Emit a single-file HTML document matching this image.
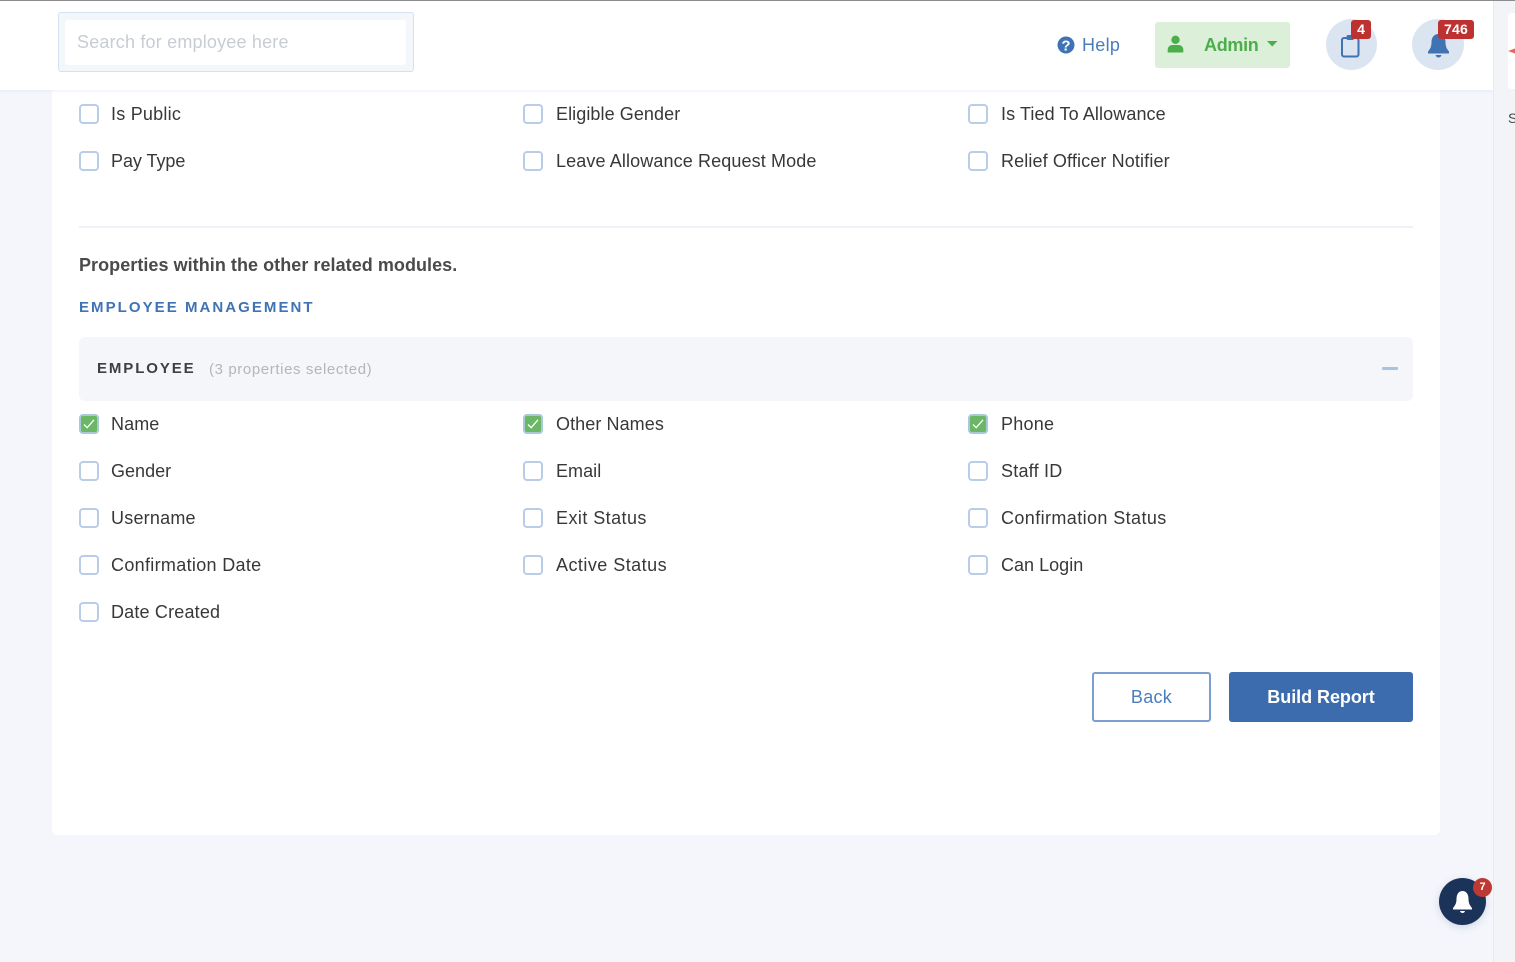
<!DOCTYPE html>
<html lang="en">
<head>
<meta charset="utf-8">
<title>Build Report</title>
<style>
html,body{margin:0;padding:0;}
body{width:1515px;height:962px;position:relative;overflow:hidden;background:#f4f6fb;font-family:"Liberation Sans",sans-serif;color:#3d3d3d;}
.a{position:absolute;}
.t{position:absolute;white-space:nowrap;line-height:22px;font-size:18px;color:#38383a;}
.c{position:absolute;width:16px;height:16px;border:2px solid #b9cde8;border-radius:4px;background:#fff;}
.g{position:absolute;width:16px;height:16px;border:2px solid #a9c8d8;border-radius:4px;background:#6ab766;}
.g svg{position:absolute;left:2px;top:2px;}
</style>
</head>
<body>
<div class="a" style="left:0;top:0;width:1493px;height:90px;background:#fff;box-shadow:0 1px 3px rgba(200,210,230,.35);z-index:3;"></div>
<div class="a" style="left:0;top:0;width:1515px;height:1px;background:#8c8c8c;z-index:6;"></div>

<div class="a" style="left:58px;top:12px;width:354px;height:58px;background:#f3f6fb;border:1px solid #d5e1f0;border-radius:3px;z-index:4;"></div>
<div class="a" style="left:65px;top:20px;width:341px;height:45px;background:#fff;border-radius:3px;z-index:4;"></div>
<div class="t" style="left:77px;top:31px;color:#c8ccd3;letter-spacing:.19px;z-index:5;">Search for employee here</div>

<svg class="a" style="left:1057px;top:36px;z-index:5;" width="18" height="18" viewBox="0 0 18 18"><circle cx="9" cy="9" r="8.500" fill="#3f73b4"/><text x="9" y="14.500" text-anchor="middle" font-family="Liberation Sans" font-weight="700" font-size="15" fill="#fff">?</text></svg>
<div class="t" style="left:1082px;top:34px;color:#4a7dbc;letter-spacing:.3px;z-index:5;">Help</div>

<div class="a" style="left:1155px;top:22px;width:135px;height:46px;background:#dcefd9;border-radius:3px;z-index:5;"></div>
<svg class="a" style="left:1167px;top:35px;z-index:6;" width="17" height="18" viewBox="0 0 17 18"><circle cx="8.500" cy="4.800" r="4.200" fill="#4cae4a"/><path d="M.7 17.500v-2.700C.7 11.800 3 10 5.500 10h6c2.500 0 4.800 1.800 4.800 4.800v2.700z" fill="#4cae4a"/></svg>
<div class="t" style="left:1204px;top:34px;color:#4cae4a;font-weight:700;letter-spacing:-.3px;z-index:6;">Admin</div>
<svg class="a" style="left:1267px;top:41px;z-index:6;" width="11" height="6" viewBox="0 0 11 6"><path d="M0 0h10.500L5.200 5.500z" fill="#4cae4a"/></svg>

<div class="a" style="left:1326px;top:19px;width:51px;height:51px;border-radius:50%;background:#dbe5f1;z-index:5;"></div>
<svg class="a" style="left:1340px;top:33px;z-index:6;" width="21" height="25" viewBox="0 0 21 25"><rect x="2" y="5" width="16.500" height="18.500" rx="2" fill="none" stroke="#3f73b4" stroke-width="2"/><rect x="6.500" y="2" width="7.500" height="5" rx="1.500" fill="#3f73b4"/></svg>
<div class="a" style="left:1351px;top:20px;width:20px;height:19px;background:#bd3131;border-radius:3px;color:#fff;font-size:14px;font-weight:700;line-height:19px;text-align:center;z-index:7;">4</div>

<div class="a" style="left:1412px;top:19px;width:52px;height:51px;border-radius:50%;background:#dbe5f1;z-index:5;"></div>
<svg class="a" style="left:1427px;top:33px;z-index:6;" width="23" height="25" viewBox="0 0 23 25"><path d="M11.500 1c-4.500 0-7 3.500-7 8 0 5-1.500 7-3.500 9.500v2h21v-2C20 16 18.500 14 18.500 9c0-4.500-2.500-8-7-8z" fill="#3f73b4"/><path d="M8.500 22h6c-.5 1.800-1.500 2.500-3 2.500s-2.500-.7-3-2.500z" fill="#3f73b4"/></svg>
<div class="a" style="left:1438px;top:20px;width:36px;height:19px;background:#bd3131;border-radius:3px;color:#fff;font-size:14px;font-weight:700;line-height:19px;text-align:center;letter-spacing:.2px;z-index:7;">746</div>

<div class="a" style="left:52px;top:90px;width:1388px;height:745px;background:#fff;border-radius:0 0 6px 6px;"></div>

<div class="c" style="left:79px;top:104px;"></div><div class="t" style="left:111px;top:103px;letter-spacing:.23px;">Is Public</div>
<div class="c" style="left:523px;top:104px;"></div><div class="t" style="left:556px;top:103px;letter-spacing:.08px;">Eligible Gender</div>
<div class="c" style="left:968px;top:104px;"></div><div class="t" style="left:1001px;top:103px;letter-spacing:.1px;">Is Tied To Allowance</div>
<div class="c" style="left:79px;top:151px;"></div><div class="t" style="left:111px;top:150px;letter-spacing:-.05px;">Pay Type</div>
<div class="c" style="left:523px;top:151px;"></div><div class="t" style="left:556px;top:150px;letter-spacing:.12px;">Leave Allowance Request Mode</div>
<div class="c" style="left:968px;top:151px;"></div><div class="t" style="left:1001px;top:150px;letter-spacing:.13px;">Relief Officer Notifier</div>

<div class="a" style="left:79px;top:226px;width:1334px;height:2px;background:#eef1f6;"></div>
<div class="t" style="left:79px;top:254px;font-weight:700;color:#4a4a4c;letter-spacing:.05px;">Properties within the other related modules.</div>
<div class="t" style="left:79px;top:297px;font-size:15px;font-weight:700;color:#3f73b4;letter-spacing:2.05px;">EMPLOYEE MANAGEMENT</div>

<div class="a" style="left:79px;top:337px;width:1334px;height:64px;background:#f4f6fa;border-radius:6px;"></div>
<div class="t" style="left:97px;top:358px;font-size:15px;font-weight:700;color:#3f3f41;letter-spacing:1.9px;">EMPLOYEE</div>
<div class="t" style="left:209px;top:359px;font-size:15px;color:#b4b6ba;letter-spacing:.61px;">(3 properties selected)</div>
<div class="a" style="left:1382px;top:367px;width:16px;height:3px;background:#a9c1e2;border-radius:1px;"></div>

<div class="g" style="left:79px;top:414px;"><svg width="12" height="12" viewBox="0 0 12 12"><path d="M1 6.500l3.200 3.200L11 1.800" fill="none" stroke="#fff" stroke-width="1.300"/></svg></div><div class="t" style="left:111px;top:413px;letter-spacing:.1px;">Name</div>
<div class="g" style="left:523px;top:414px;"><svg width="12" height="12" viewBox="0 0 12 12"><path d="M1 6.500l3.200 3.200L11 1.800" fill="none" stroke="#fff" stroke-width="1.300"/></svg></div><div class="t" style="left:556px;top:413px;letter-spacing:.08px;">Other Names</div>
<div class="g" style="left:968px;top:414px;"><svg width="12" height="12" viewBox="0 0 12 12"><path d="M1 6.500l3.200 3.200L11 1.800" fill="none" stroke="#fff" stroke-width="1.300"/></svg></div><div class="t" style="left:1001px;top:413px;letter-spacing:.25px;">Phone</div>

<div class="c" style="left:79px;top:461px;"></div><div class="t" style="left:111px;top:460px;letter-spacing:.02px;">Gender</div>
<div class="c" style="left:523px;top:461px;"></div><div class="t" style="left:556px;top:460px;letter-spacing:.05px;">Email</div>
<div class="c" style="left:968px;top:461px;"></div><div class="t" style="left:1001px;top:460px;letter-spacing:.22px;">Staff ID</div>

<div class="c" style="left:79px;top:508px;"></div><div class="t" style="left:111px;top:507px;letter-spacing:.22px;">Username</div>
<div class="c" style="left:523px;top:508px;"></div><div class="t" style="left:556px;top:507px;letter-spacing:.44px;">Exit Status</div>
<div class="c" style="left:968px;top:508px;"></div><div class="t" style="left:1001px;top:507px;letter-spacing:.4px;">Confirmation Status</div>

<div class="c" style="left:79px;top:555px;"></div><div class="t" style="left:111px;top:554px;letter-spacing:.32px;">Confirmation Date</div>
<div class="c" style="left:523px;top:555px;"></div><div class="t" style="left:556px;top:554px;letter-spacing:.46px;">Active Status</div>
<div class="c" style="left:968px;top:555px;"></div><div class="t" style="left:1001px;top:554px;letter-spacing:.02px;">Can Login</div>

<div class="c" style="left:79px;top:602px;"></div><div class="t" style="left:111px;top:601px;letter-spacing:.18px;">Date Created</div>

<div class="a" style="left:1092px;top:672px;width:115px;height:46px;border:2px solid #7a9fd0;border-radius:3px;background:#fff;color:#4a7dbc;font-size:18px;line-height:46px;text-align:center;letter-spacing:.3px;">Back</div>
<div class="a" style="left:1229px;top:672px;width:184px;height:50px;background:#3d6cae;border-radius:3px;color:#fff;font-size:18px;font-weight:700;line-height:50px;text-align:center;letter-spacing:-.05px;">Build Report</div>

<div class="a" style="left:1439px;top:878px;width:47px;height:47px;border-radius:50%;background:#1b3358;box-shadow:0 2px 8px rgba(60,90,140,.2);"></div>
<svg class="a" style="left:1452px;top:890px;" width="21" height="25" viewBox="0 0 21 25"><path d="M10.500 1C6.500 1 4.500 4.500 4.500 9c0 4.500-1.500 6.500-3.500 9v1.500h19V18c-2-2.500-3.500-4.500-3.500-9 0-4.500-2-8-6-8z" fill="#fff"/><path d="M8 21h5c-.4 1.300-1.200 2-2.500 2S8.400 22.300 8 21z" fill="#fff"/></svg>
<div class="a" style="left:1473px;top:878px;width:19px;height:19px;border-radius:50%;background:#bd3a33;color:#fff;font-size:11px;font-weight:700;line-height:19px;text-align:center;">7</div>

<div class="a" style="left:1493px;top:0;width:22px;height:962px;background:#f3f4f7;border-left:1px solid #e6eaf2;box-sizing:border-box;z-index:4;"></div>
<div class="a" style="left:1508px;top:13px;width:7px;height:76px;background:#fff;border-radius:3px 0 0 3px;z-index:5;"></div>
<svg class="a" style="left:1508px;top:47px;z-index:6;" width="7" height="8" viewBox="0 0 7 8"><path d="M0 4L7 1.500V6.500z" fill="#e8665c"/></svg>
<div class="t" style="left:1508px;top:107px;font-size:14px;color:#4a4a4c;z-index:6;">S</div>
</body>
</html>
